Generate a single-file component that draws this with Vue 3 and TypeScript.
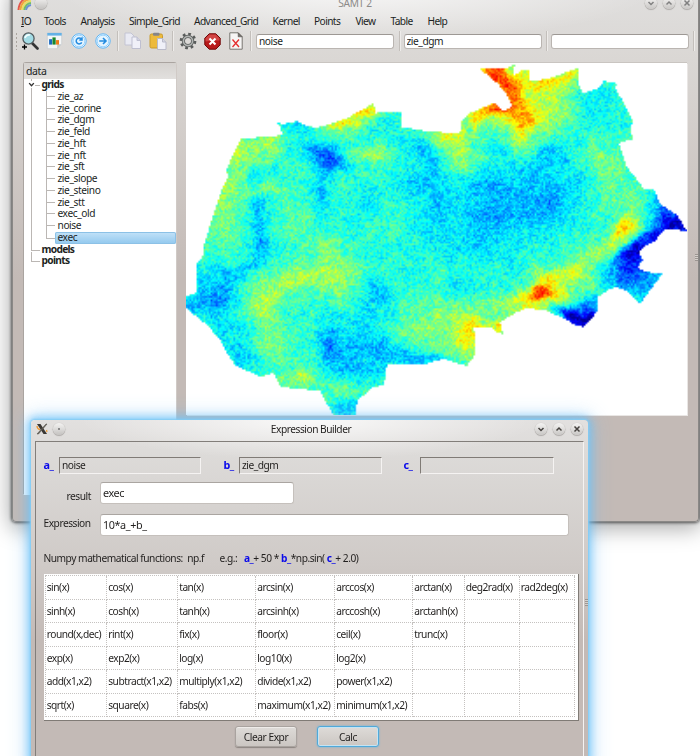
<script setup lang="ts">
import { onMounted, ref } from 'vue'

interface Blob {
  x: number
  y: number
  rx: number
  ry: number
  amp: number
  rot?: number
}

const menu = [
  { label: 'IO', w: 23 },
  { label: 'Tools', w: 36.5 },
  { label: 'Analysis', w: 48.5 },
  { label: 'Simple_Grid', w: 65 },
  { label: 'Advanced_Grid', w: 78.5 },
  { label: 'Kernel', w: 41.5 },
  { label: 'Points', w: 41.5 },
  { label: 'View', w: 35 },
  { label: 'Table', w: 37 },
  { label: 'Help', w: 30 },
]

const grids = [
  'zie_az', 'zie_corine', 'zie_dgm', 'zie_feld', 'zie_hft', 'zie_nft', 'zie_sft',
  'zie_slope', 'zie_steino', 'zie_stt', 'exec_old', 'noise', 'exec',
]

const functions: string[][] = [
  ['sin(x)', 'cos(x)', 'tan(x)', 'arcsin(x)', 'arccos(x)', 'arctan(x)', 'deg2rad(x)', 'rad2deg(x)'],
  ['sinh(x)', 'cosh(x)', 'tanh(x)', 'arcsinh(x)', 'arccosh(x)', 'arctanh(x)', '', ''],
  ['round(x,dec)', 'rint(x)', 'fix(x)', 'floor(x)', 'ceil(x)', 'trunc(x)', '', ''],
  ['exp(x)', 'exp2(x)', 'log(x)', 'log10(x)', 'log2(x)', '', '', ''],
  ['add(x1,x2)', 'subtract(x1,x2)', 'multiply(x1,x2)', 'divide(x1,x2)', 'power(x1,x2)', '', '', ''],
  ['sqrt(x)', 'square(x)', 'fabs(x)', 'maximum(x1,x2)', 'minimum(x1,x2)', '', '', ''],
]

const inputA = ref('noise')
const inputB = ref('zie_dgm')
const map = ref<HTMLCanvasElement | null>(null)

const cols = 286
const rows = 201
const originX = 186
const originY = 63
const cell = 501 / cols

const outline: number[] = [
  241, 138, 267, 137, 282, 135, 281, 128, 277, 122, 283, 124, 297, 121, 305, 125, 316, 128, 330, 124, 347, 118,
  362, 110, 373, 103, 376, 113, 387, 112, 401, 111.5, 401, 127, 425, 131, 440, 132, 458, 134, 461, 130, 462, 120,
  470, 113, 494, 103, 504, 111, 512, 106, 507, 95, 498, 84, 480, 69, 505, 69, 515, 64, 513, 76, 522, 70, 530, 69,
  529, 81, 547, 79, 578, 68, 579, 85, 583, 93, 597, 89, 604, 81, 619, 84, 615, 87, 622, 100, 633, 122, 630, 128,
  633, 139, 619, 143, 627, 167, 645, 190, 654, 189, 660, 204, 677, 215, 687, 231, 665, 229, 655, 241, 643, 247,
  639, 253, 643, 260, 638, 267, 645, 272, 663, 273, 640, 304, 628, 292, 617, 287, 608, 290, 598, 297, 597, 312,
  584, 327, 577, 326, 563, 318, 547, 311, 527, 308, 515, 313, 500, 322, 503, 334, 497, 332, 490, 327, 474, 327,
  475, 355, 467, 366, 443, 359, 422, 365, 387, 365, 384, 385, 372, 388, 357, 401, 356, 415, 333, 415, 320, 391,
  300, 389, 281, 387, 273, 373, 260, 377, 235, 365, 228, 355, 220, 340, 208, 326, 186, 308, 186, 296, 196, 293,
  196, 264, 204, 255, 203, 248, 217, 203, 223, 187, 228, 177, 226, 170,
]

const blobs: Blob[] = [
  // high ground along the northern edge
  { x: 492, y: 73, rx: 18, ry: 12, amp: 0.34, rot: 0.5 },
  { x: 511, y: 92, rx: 13, ry: 20, amp: 0.29, rot: -0.3 },
  { x: 524, y: 72, rx: 10, ry: 9, amp: 0.12 },
  { x: 540, y: 84, rx: 14, ry: 8, amp: 0.16 },
  { x: 567, y: 77, rx: 18, ry: 10, amp: 0.19, rot: -0.3 },
  { x: 524, y: 121, rx: 16, ry: 15, amp: 0.19 },
  { x: 496, y: 107, rx: 14, ry: 7, amp: 0.28 },
  { x: 478, y: 116, rx: 15, ry: 9, amp: 0.2, rot: -0.3 },
  { x: 500, y: 122, rx: 20, ry: 9, amp: 0.08 },
  { x: 550, y: 106, rx: 24, ry: 20, amp: 0.12 },
  { x: 367, y: 111, rx: 14, ry: 7, amp: 0.2, rot: -0.5 },
  { x: 345, y: 122, rx: 20, ry: 8, amp: 0.16, rot: -0.3 },
  { x: 375, y: 155, rx: 20, ry: 7, amp: 0.12 },
  { x: 444, y: 137, rx: 19, ry: 7, amp: 0.15 },
  { x: 461, y: 154, rx: 16, ry: 18, amp: 0.13 },
  { x: 520, y: 143, rx: 16, ry: 12, amp: 0.09 },
  // western slopes
  { x: 240, y: 148, rx: 16, ry: 15, amp: 0.12 },
  { x: 270, y: 143, rx: 9, ry: 14, amp: 0.12 },
  { x: 228, y: 190, rx: 12, ry: 32, amp: 0.09, rot: 0.3 },
  { x: 267, y: 190, rx: 9, ry: 6, amp: 0.11 },
  { x: 220, y: 225, rx: 18, ry: 28, amp: 0.05 },
  { x: 300, y: 212, rx: 18, ry: 24, amp: 0.04 },
  // central ridge
  { x: 331, y: 246, rx: 14, ry: 11, amp: 0.08 },
  { x: 298, y: 281, rx: 22, ry: 8, amp: 0.08, rot: -0.25 },
  { x: 322, y: 274, rx: 24, ry: 15, amp: 0.07 },
  { x: 264, y: 306, rx: 13, ry: 12, amp: 0.11, rot: -0.5 },
  { x: 270, y: 290, rx: 16, ry: 12, amp: 0.06 },
  { x: 345, y: 288, rx: 19, ry: 20, amp: 0.07 },
  { x: 273, y: 341, rx: 15, ry: 24, amp: 0.07 },
  { x: 306, y: 377, rx: 12, ry: 7, amp: 0.1, rot: 0.5 },
  { x: 290, y: 382, rx: 20, ry: 10, amp: 0.08 },
  { x: 348, y: 391, rx: 20, ry: 7, amp: 0.07 },
  { x: 425, y: 323, rx: 38, ry: 24, amp: 0.07 },
  { x: 418, y: 342, rx: 17, ry: 9, amp: 0.04 },
  // south-eastern peaks
  { x: 541, y: 293, rx: 10, ry: 6, amp: 0.24 },
  { x: 534, y: 297, rx: 26, ry: 11, amp: 0.16, rot: -0.3 },
  { x: 548, y: 278, rx: 12, ry: 9, amp: 0.11 },
  { x: 565, y: 273, rx: 14, ry: 8, amp: 0.11, rot: -0.3 },
  { x: 584, y: 270, rx: 22, ry: 18, amp: 0.08, rot: -0.4 },
  { x: 565, y: 300, rx: 11, ry: 9, amp: 0.13 },
  { x: 540, y: 308, rx: 14, ry: 5, amp: 0.1 },
  { x: 463, y: 334, rx: 12, ry: 15, amp: 0.15, rot: 0.3 },
  { x: 474, y: 346, rx: 10, ry: 12, amp: 0.11 },
  { x: 490, y: 325, rx: 26, ry: 5, amp: 0.14 },
  { x: 502, y: 329, rx: 6, ry: 6, amp: 0.12 },
  { x: 490, y: 306, rx: 34, ry: 16, amp: 0.03 },
  { x: 441, y: 353, rx: 14, ry: 8, amp: 0.05 },
  { x: 626, y: 229, rx: 8, ry: 12, amp: 0.22, rot: 0.6 },
  { x: 612, y: 245, rx: 20, ry: 10, amp: 0.12, rot: -0.6 },
  { x: 610, y: 175, rx: 16, ry: 25, amp: 0.08 },
  { x: 592, y: 153, rx: 13, ry: 11, amp: 0.06 },
  { x: 632, y: 205, rx: 12, ry: 14, amp: 0.05 },
  // basins
  { x: 330, y: 155, rx: 13, ry: 10, amp: -0.2, rot: 0.5 },
  { x: 311, y: 149, rx: 9, ry: 8, amp: -0.12 },
  { x: 336, y: 167, rx: 13, ry: 9, amp: -0.08 },
  { x: 321, y: 195, rx: 9, ry: 28, amp: -0.09 },
  { x: 285, y: 150, rx: 6, ry: 6, amp: -0.09 },
  { x: 296, y: 126, rx: 12, ry: 8, amp: -0.06 },
  { x: 256, y: 170, rx: 20, ry: 9, amp: -0.04 },
  { x: 260, y: 215, rx: 7, ry: 15, amp: -0.1 },
  { x: 259, y: 243, rx: 9, ry: 18, amp: -0.11 },
  { x: 248, y: 268, rx: 18, ry: 8, amp: -0.08, rot: -0.5 },
  { x: 216, y: 285, rx: 20, ry: 22, amp: -0.1 },
  { x: 219, y: 301, rx: 12, ry: 8, amp: -0.09 },
  { x: 190, y: 304, rx: 19, ry: 9, amp: -0.12 },
  { x: 223, y: 330, rx: 18, ry: 18, amp: -0.08, rot: 0.8 },
  { x: 242, y: 362, rx: 16, ry: 16, amp: -0.07 },
  { x: 329, y: 343, rx: 8, ry: 17, amp: -0.13 },
  { x: 352, y: 355, rx: 26, ry: 28, amp: -0.1 },
  { x: 395, y: 352, rx: 26, ry: 13, amp: -0.11, rot: 0.15 },
  { x: 428, y: 361, rx: 16, ry: 6, amp: -0.1 },
  { x: 374, y: 287, rx: 9, ry: 14, amp: -0.08, rot: -0.4 },
  { x: 365, y: 312, rx: 26, ry: 14, amp: -0.05 },
  { x: 385, y: 300, rx: 15, ry: 14, amp: -0.05 },
  { x: 344, y: 410, rx: 15, ry: 9, amp: -0.07 },
  { x: 365, y: 208, rx: 18, ry: 20, amp: -0.05 },
  { x: 418, y: 147, rx: 22, ry: 15, amp: -0.07 },
  { x: 434, y: 166, rx: 18, ry: 18, amp: -0.06 },
  { x: 414, y: 184, rx: 18, ry: 16, amp: -0.05 },
  { x: 438, y: 207, rx: 18, ry: 20, amp: -0.06 },
  { x: 389, y: 122, rx: 13, ry: 10, amp: -0.04 },
  { x: 485, y: 182, rx: 36, ry: 16, amp: -0.09 },
  { x: 546, y: 188, rx: 27, ry: 28, amp: -0.1 },
  { x: 497, y: 215, rx: 42, ry: 22, amp: -0.09 },
  { x: 492, y: 217, rx: 12, ry: 4, amp: -0.05 },
  { x: 556, y: 212, rx: 20, ry: 18, amp: -0.05 },
  { x: 550, y: 152, rx: 22, ry: 12, amp: -0.07 },
  { x: 590, y: 112, rx: 24, ry: 24, amp: -0.06 },
  { x: 480, y: 244, rx: 55, ry: 18, amp: -0.06 },
  { x: 462, y: 287, rx: 16, ry: 12, amp: -0.06 },
  { x: 492, y: 147, rx: 18, ry: 9, amp: -0.06 },
  { x: 583, y: 322, rx: 18, ry: 12, amp: -0.38 },
  { x: 566, y: 315, rx: 10, ry: 5, amp: -0.18, rot: 0.4 },
  { x: 587, y: 302, rx: 12, ry: 8, amp: -0.12 },
  { x: 682, y: 227, rx: 22, ry: 16, amp: -0.31, rot: 0.6 },
  { x: 661, y: 218, rx: 13, ry: 9, amp: -0.13 },
  { x: 648, y: 242, rx: 20, ry: 8, amp: -0.29, rot: -0.5 },
  { x: 634, y: 258, rx: 12, ry: 14, amp: -0.19, rot: -0.4 },
  { x: 622, y: 274, rx: 13, ry: 17, amp: -0.12 },
  { x: 648, y: 282, rx: 24, ry: 20, amp: -0.14 },
  { x: 603, y: 271, rx: 10, ry: 16, amp: -0.05 },
  { x: 659, y: 200, rx: 9, ry: 9, amp: -0.07 },
]

function jet(v: number): [number, number, number] {
  const ramp = (c: number) => Math.max(0, Math.min(1, 1.5 - Math.abs(4 * v - c))) * 255
  return [ramp(3), ramp(2), ramp(1)]
}

let seed = 20117
function random(): number {
  seed = (seed * 1664525 + 1013904223) >>> 0
  return seed / 4294967296
}

function smoothNoise(size: number): (x: number, y: number) => number {
  const w = Math.ceil(520 / size) + 2
  const h = Math.ceil(370 / size) + 2
  const grid = Array.from({ length: w * h }, () => random() - 0.5)
  return (x, y) => {
    const gx = x / size
    const gy = y / size
    const ix = Math.floor(gx)
    const iy = Math.floor(gy)
    const fx = gx - ix
    const fy = gy - iy
    const k = iy * w + ix
    const top = grid[k] * (1 - fx) + grid[k + 1] * fx
    const bottom = grid[k + w] * (1 - fx) + grid[k + w + 1] * fx
    return top * (1 - fy) + bottom * fy
  }
}

onMounted(() => {
  const ctx = map.value?.getContext('2d')
  if (!ctx) return
  const region = new Path2D()
  for (let i = 0; i < outline.length; i += 2) {
    region.lineTo(outline[i] - originX, outline[i + 1] - originY)
  }
  region.closePath()
  const coarse = smoothNoise(14)
  const fine = smoothNoise(3.2)
  const warpX = smoothNoise(11)
  const warpY = smoothNoise(9)
  const image = ctx.createImageData(cols, rows)
  for (let r = 0; r < rows; r++) {
    for (let c = 0; c < cols; c++) {
      const px = (c + 0.5) * cell
      const py = (r + 0.5) * cell
      const k = (r * cols + c) * 4
      const grain = random() - 0.5
      if (!ctx.isPointInPath(region, px, py)) {
        image.data.fill(255, k, k + 4)
        continue
      }
      const wx = px + originX + warpX(px, py) * 10
      const wy = py + originY + warpY(px, py) * 10
      let v = 0.422
      for (const b of blobs) {
        const dx = wx - b.x
        const dy = wy - b.y
        const cos = Math.cos(b.rot ?? 0)
        const sin = Math.sin(b.rot ?? 0)
        const u = (dx * cos + dy * sin) / b.rx
        const w = (dy * cos - dx * sin) / b.ry
        const d = u * u + w * w
        if (d < 9) v += b.amp * Math.exp(-d * 0.8)
      }
      v += coarse(px, py) * 0.05 + fine(px, py) * 0.07 + grain * 0.13
      const [red, green, blue] = jet(Math.max(0.02, Math.min(0.95, v)))
      image.data[k] = red
      image.data[k + 1] = green
      image.data[k + 2] = blue
      image.data[k + 3] = 255
    }
  }
  ctx.putImageData(image, 0, 0)
})
</script>

<template>
  <div class="desktop">
    <section class="window main">
      <header class="main-title">
        <svg class="rainbow" width="15" height="14" viewBox="0 0 15 14" fill="none" stroke-width="2">
          <path d="M1.500 14C2 6 7 1.500 14 1" stroke="#e2574c" />
          <path d="M3.400 14C4 7.500 8 3.500 14 3" stroke="#f0a63c" />
          <path d="M5.300 14C6 9 9 5.500 14 5" stroke="#e8df61" />
          <path d="M7.200 14C8 10.300 10 7.500 14 7" stroke="#74bd68" />
          <path d="M9 14C9.500 11.500 11 9.500 14 9" stroke="#6c94d2" />
        </svg>
        <span class="knob dot faded"></span>
        <span class="title-text">SAMT 2</span>
        <span class="knob faded"><svg viewBox="0 0 12 12"><path d="M3.500 5l2.500 2.500L8.500 5" /></svg></span>
        <span class="knob faded"><svg viewBox="0 0 12 12"><path d="M3.500 7.500L6 5l2.500 2.500" /></svg></span>
        <span class="knob faded"><svg viewBox="0 0 12 12"><path d="M3.500 3.500l5 5m0-5l-5 5" /></svg></span>
      </header>
      <nav class="menubar">
        <span v-for="item in menu" :key="item.label" :style="{ width: item.w + 'px' }">
          <template v-if="item.label === 'IO'"><u>I</u>O</template>
          <template v-else>{{ item.label }}</template>
        </span>
      </nav>
      <div class="toolbar">
        <i class="grip"></i>
        <svg class="tool zoom" viewBox="0 0 18 18">
          <path d="M11 11l5.500 5.500" stroke="#333" stroke-width="2.600" stroke-linecap="round" />
          <circle cx="7.500" cy="6.500" r="5.600" fill="#a3dce5" stroke="#525b5e" stroke-width="1.300" />
          <path d="M4 6a4 4 0 0 1 5-3" fill="none" stroke="#f2ffff" stroke-width="1.800" />
          <path d="M1 15h5m-2.500-2.500v5" stroke="#000" stroke-width="1.300" />
        </svg>
        <svg class="tool chart" viewBox="0 0 18 20">
          <path d="M1 1.500h16v12l-5 5H1z" fill="#f4f6f7" stroke="#c3c8ca" stroke-width=".7" />
          <path d="M1 1h16v3H1z" fill="#63b1e6" />
          <path d="M17 13.500h-5v5z" fill="#c6cacc" />
          <path d="M3 8h3.300v6H3z" fill="#1a69c0" />
          <path d="M6.700 6h3.600v8H6.700z" fill="#18872d" />
          <path d="M10.700 9H14v5h-3.300z" fill="#ee7a19" />
        </svg>
        <svg class="tool round" viewBox="0 0 16 16">
          <circle cx="8" cy="8" r="7.200" fill="#fff" stroke="#5ab4f7" stroke-width="1" />
          <circle cx="8" cy="8" r="5.900" fill="#e4f4ff" stroke="#7cc5fb" stroke-width=".8" />
          <path d="M10.300 6.100A2.900 2.900 0 1 0 10.700 9.300M11 4.200v2.800H8.300" fill="none" stroke="#258ce0" stroke-width="1.500" />
        </svg>
        <svg class="tool round next" viewBox="0 0 16 16">
          <circle cx="8" cy="8" r="7.200" fill="#fff" stroke="#5ab4f7" stroke-width="1" />
          <circle cx="8" cy="8" r="5.900" fill="#e4f4ff" stroke="#7cc5fb" stroke-width=".8" />
          <path d="M4.200 8h6.600M8 5l3 3-3 3" fill="none" stroke="#258ce0" stroke-width="1.600" />
        </svg>
        <i class="sep s1"></i>
        <svg class="tool copy" viewBox="0 0 18 18">
          <path d="M1 1h6l3 3v9H1z" fill="#e9eaf3" stroke="#c3c4d3" />
          <path d="M8 5h5l3.500 3.500V16.500H8z" fill="#f0f0f8" stroke="#bebfd0" />
          <path d="M13 5v3.500h3.500" fill="#d3d4e2" stroke="#bebfd0" />
        </svg>
        <svg class="tool paste" viewBox="0 0 18 18">
          <rect x="1" y="2" width="12.500" height="14" rx="1.500" fill="#edba3c" stroke="#c99b2d" />
          <rect x="4" y=".7" width="6.500" height="3" rx="1" fill="#85858a" />
          <path d="M8.500 6.500h5l3.500 3.500v7.500H8.500z" fill="#eff0f8" stroke="#b9bac9" />
          <path d="M13.500 6.500V10H17" fill="#d6d8e4" stroke="#b9bac9" />
        </svg>
        <i class="sep s2"></i>
        <svg class="tool gear" viewBox="0 0 18 18">
          <circle cx="9" cy="9" r="7" fill="none" stroke="#595c5b" stroke-width="2.700" stroke-dasharray="2.700 2.798" />
          <circle cx="9" cy="9" r="4.600" fill="none" stroke="#5b5e5d" stroke-width="3.200" />
          <circle cx="9" cy="9" r="4.600" fill="none" stroke="#b1b4b2" stroke-width="1.600" />
        </svg>
        <svg class="tool stop" viewBox="0 0 17 17">
          <path d="M5.200.8h6.600l4.400 4.400v6.600l-4.400 4.400H5.200L.8 11.800V5.200z" fill="#b81a1a" stroke="#6e0808" />
          <path d="M5.300 1.500h6.400l3.800 3.800v2.200Q8.500 7 1.500 8.500V5.300z" fill="#dc5959" opacity=".7" />
          <path d="M5.500 5.500l6 6m0-6l-6 6" stroke="#fff" stroke-width="2.100" />
        </svg>
        <svg class="tool del" viewBox="0 0 14 18">
          <path d="M.8.8h8.400l4 4v12.400H.8z" fill="#f6f5f4" stroke="#777570" />
          <path d="M9.200.8v4h4z" fill="#76736f" stroke="#55534f" stroke-width=".6" />
          <path d="M3.500 7.500l6.500 7.500m0-7.500L3.500 15" stroke="#e52d2d" stroke-width="1.300" />
        </svg>
        <i class="sep s3"></i>
        <input v-model="inputA" class="field" type="text" />
        <i class="sep s4"></i>
        <input v-model="inputB" class="field" type="text" />
        <i class="sep s4"></i>
        <input class="field" type="text" />
        <i class="sep s5"></i>
      </div>
      <div class="workspace">
        <aside class="tree">
          <div class="tree-head">data</div>
          <ul>
            <li class="branch open">
              <svg class="caret" viewBox="0 0 6 6"><path d="M1 1.800L3 4l2-2.200" /></svg>
              <b>grids</b>
              <ul>
                <li v-for="name in grids" :key="name" class="leaf" :class="{ selected: name === 'exec' }"><span>{{ name }}</span></li>
              </ul>
            </li>
            <li class="branch"><b>models</b></li>
            <li class="branch"><b>points</b></li>
          </ul>
        </aside>
        <canvas ref="map" class="map" :width="cols" :height="rows"></canvas>
        <i class="handle"></i>
      </div>
    </section>

    <section class="window dialog">
      <header class="dialog-title">
        <svg class="xlogo" viewBox="0 0 12 12">
          <path d="M1 1h3.500l6.500 10H7.500z" fill="#3b3834" />
          <path d="M10 1h1L2.500 11H1z" fill="#5d5953" stroke="#5d5953" stroke-width=".6" />
          <path d="M1 3q0 3 3 3.500" stroke="#ef9b36" stroke-width="1.300" fill="none" />
          <path d="M10.500 7l.5 2" stroke="#ef9b36" stroke-width="1.200" />
        </svg>
        <span class="knob dot"></span>
        <span class="title-text">Expression Builder</span>
        <span class="knob"><svg viewBox="0 0 12 12"><path d="M3.500 5l2.500 2.500L8.500 5" /></svg></span>
        <span class="knob"><svg viewBox="0 0 12 12"><path d="M3.500 7.500L6 5l2.500 2.500" /></svg></span>
        <span class="knob"><svg viewBox="0 0 12 12"><path d="M3.500 3.500l5 5m0-5l-5 5" /></svg></span>
      </header>
      <div class="panel">
        <div class="vars">
          <label>a_</label><span class="sunken wa">noise</span>
          <label>b_</label><span class="sunken wb">zie_dgm</span>
          <label>c_</label><span class="sunken wc"></span>
        </div>
        <div class="row result"><label>result</label><div class="line">exec</div></div>
        <div class="row expr"><label>Expression</label><div class="line">10*a_+b_</div></div>
        <p class="hint">
          <span class="lead">Numpy mathematical functions:&nbsp; np.f</span>
          <span class="eg">e.g.:</span>
          <span><b>a_</b>+ 50 * <b>b_</b>*np.sin( <b>c_</b>+ 2.0)</span>
        </p>
        <div class="table-box">
          <div class="functions">
            <template v-for="(line, r) in functions" :key="r">
              <span v-for="(fn, c) in line" :key="c">{{ fn }}</span>
            </template>
          </div>
        </div>
        <div class="actions">
          <button type="button">Clear Expr</button>
          <button type="button" class="primary">Calc</button>
        </div>
        <i class="handle"></i>
      </div>
    </section>
  </div>
</template>

<style>
body {
  margin: 0;
  background: #fff;
}
</style>

<style scoped>
* {
  box-sizing: border-box;
}
.desktop {
  position: relative;
  width: 700px;
  height: 756px;
  overflow: hidden;
  background: #fff;
  color: #211f1e;
  font: 10.2px/12px "Noto Sans", "Open Sans", sans-serif;
  letter-spacing: -.48px;
}
.window {
  position: absolute;
}
.main {
  left: 12px;
  top: -12px;
  width: 687px;
  height: 534px;
  padding-top: 5px;
  border: 1px solid #8a8886;
  border-top: 0;
  border-radius: 4px;
  background:
    radial-gradient(ellipse 300px 55px at 50% 0, rgba(255, 255, 255, .75), rgba(255, 255, 255, 0)),
    linear-gradient(#e0dfde 0, #dad7d4 72px, #c3bab6 290px, #c3bab6);
  box-shadow: 0 0 3px 1px #555, 0 4px 22px 2px rgba(0, 0, 0, .35);
}
.main-title {
  display: flex;
  align-items: center;
  height: 19px;
  padding: 0 5px 0 4px;
}
.rainbow {
  flex: none;
}
.title-text {
  flex: 1;
  text-align: center;
}
.main-title .title-text {
  color: #8d8b89;
  padding-left: 24px;
  letter-spacing: -.3px;
}
.knob {
  display: block;
  flex: none;
  width: 12px;
  height: 12px;
  margin-left: 6px;
  border-radius: 50%;
  background: linear-gradient(#f4f3f2, #c9c7c5);
  box-shadow: 0 .5px 1px .3px #a19e9b;
}
.knob svg {
  display: block;
  fill: none;
  stroke: #45423f;
  stroke-width: 1.5;
}
.faded svg {
  stroke: #808080;
}
.dot {
  margin-left: 3px;
  background: radial-gradient(circle, #888 0, #888 .7px, transparent 1.2px), linear-gradient(#f4f3f2, #c4c2c0);
}
.faded.dot {
  background: linear-gradient(#f4f3f2, #c4c2c0);
}
.menubar {
  display: flex;
  height: 17px;
  padding-left: 8px;
  line-height: 18px;
  letter-spacing: -.6px;
  white-space: nowrap;
}
.menubar span {
  flex: none;
}
.toolbar {
  display: flex;
  align-items: center;
  height: 24px;
  padding-left: 2px;
}
.grip {
  width: 4px;
  height: 18px;
  background: radial-gradient(circle, #aaa59f .8px, transparent 1px) 0 0 / 3px 4px;
}
.tool {
  flex: none;
  width: 18px;
  height: 18px;
}
.zoom { margin-left: 2px; }
.chart { width: 17px; margin-left: 7px; }
.round { width: 16px; height: 16px; margin-left: 8px; }
.next { margin-left: 8px; }
.copy { margin-left: 5px; }
.paste { margin-left: 7px; }
.gear { margin-left: 5px; }
.stop { width: 17px; height: 17px; margin-left: 7px; }
.del { width: 14px; margin-left: 8px; }
.sep {
  flex: none;
  width: 2px;
  height: 20px;
  border-left: 1px solid #c3bfbb;
  border-right: 1px solid #eeecea;
}
.s1 { margin-left: 6px; }
.s2 { margin-left: 5px; }
.s3 { margin-left: 7px; margin-right: 4px; }
.s4 { margin: 0 3px 0 4.500px; }
.s5 { margin-left: 4px; }
.field {
  flex: none;
  width: 138px;
  height: 15px;
  padding: 0 0 1px 2px;
  border: 1px solid #bab5b1;
  border-top-color: #9d9894;
  border-radius: 3px;
  background: #fff;
  color: inherit;
  font: inherit;
  letter-spacing: -.45px;
}
.workspace {
  display: flex;
  align-items: flex-start;
  padding: 9px 0 0 10px;
}
.tree {
  width: 154px;
  height: 433px;
  margin-right: 9px;
  border: 1px solid #aaa4a0;
  border-color: #aaa4a0 #d0cac6 #fff #aaa4a0;
  border-radius: 3px 3px 0 0;
  background: #fff;
  letter-spacing: -.42px;
}
.tree-head {
  height: 16px;
  padding: 2px;
  background: linear-gradient(#d5d2cf, #e2e0de);
  font-size: 10.5px;
}
.tree ul {
  margin: 0;
  padding: 0;
  list-style: none;
}
.tree b {
  display: block;
  padding-left: 17.5px;
  letter-spacing: -.7px;
}
.branch {
  position: relative;
  line-height: 11.8px;
}
.branch::before {
  content: "";
  position: absolute;
  left: 7px;
  top: 0;
  width: 8px;
  height: 6px;
  border: solid #bbb7b4;
  border-width: 0 0 1px 1px;
}
.branch:not(:last-child)::after {
  content: "";
  position: absolute;
  left: 7px;
  top: 8px;
  bottom: 0;
  border-left: 1px solid #bbb7b4;
}
.caret {
  position: absolute;
  left: 4px;
  top: 2px;
  z-index: 1;
  width: 7px;
  height: 7px;
  background: #fff;
  fill: none;
  stroke: #333;
  stroke-width: 1.2;
}
.leaf {
  display: flex;
  height: 11.75px;
  padding-left: 22px;
}
.leaf::before {
  content: "";
  flex: none;
  width: 8px;
  height: 6px;
  border: solid #bbb7b4;
  border-width: 0 0 1px 1px;
}
.leaf:not(:last-child)::before {
  height: 11.75px;
  border-bottom: 0;
  background: linear-gradient(#bbb7b4, #bbb7b4) 0 5px / 8px 1px no-repeat;
}
.leaf span {
  flex: 1;
  padding-left: 2.5px;
}
.selected span {
  border-radius: 2px;
  background: linear-gradient(#c3e2f8, #91c8ee);
  box-shadow: inset 0 0 0 1px #8cc1e6;
}
.map {
  display: block;
  width: 501px;
  height: 352px;
  margin-top: 1px;
  background: #fff;
  box-shadow: 0 -1px #c9c5c1, 1px 1px #e9e6e4;
}
.handle {
  width: 3px;
  height: 7px;
  background: repeating-linear-gradient(#9c9692 0 1px, #d5d0cc 1px 2px);
}
.workspace .handle {
  margin: 192px 0 0 8px;
}
.dialog {
  left: 31px;
  top: 420px;
  width: 557px;
  height: 350px;
  border-radius: 4px 4px 0 0;
  background:
    radial-gradient(ellipse 230px 40px at 50% 0, rgba(255, 255, 255, .8), rgba(255, 255, 255, 0)),
    linear-gradient(#e2e0df 0, #dddbd9 30px, #cfcac7 145px, #c3bab6 220px, #c3bab6);
  box-shadow: 0 0 2px 1px #84cdf5, 0 0 8px 3px rgba(105, 193, 250, .75), 0 0 20px 4px rgba(120, 190, 245, .45);
}
.dialog-title {
  display: flex;
  align-items: center;
  height: 21px;
  padding: 0 5px 4px;
}
.dialog-title .title-text {
  padding: 1px 0 0 28px;
}
.xlogo {
  width: 12px;
  height: 12px;
}
.dialog-title .dot {
  margin-left: 5px;
}
.panel {
  position: relative;
  width: 549px;
  height: 320px;
  margin-left: 4px;
  padding: 15px 0 0 7.500px;
  border: 1px solid #827e7a;
  border-right-color: #f5f3f2;
}
.vars {
  display: flex;
  height: 18px;
  line-height: 15px;
}
.vars label,
.hint b {
  color: #0b0bea;
  font-weight: 700;
}
.vars label {
  width: 15.500px;
  font-size: 10.8px;
}
.sunken {
  height: 17px;
  padding: 0 2px;
  border: 1px solid #807b76;
  border-right-color: #f5f3f2;
  border-bottom-color: #f5f3f2;
}
.wa { width: 142px; margin-right: 22.500px; }
.wb { width: 143px; margin-right: 21.500px; }
.wc { width: 134px; margin-left: 1px; }
.row {
  display: flex;
  align-items: center;
}
.row label {
  width: 56px;
}
.result {
  margin-top: 7px;
}
.result label {
  padding: 5px 0 0 23px;
}
.line {
  height: 22px;
  padding-left: 2.5px;
  border: 1px solid #c5c0bc;
  border-top-color: #aaa5a1;
  border-radius: 3px;
  background: #fff;
  font-size: 10.8px;
  line-height: 20px;
  letter-spacing: -.4px;
}
.result .line {
  width: 194px;
}
.expr {
  margin-top: 10px;
}
.expr label {
  padding-bottom: 4px;
}
.expr .line {
  width: 469px;
}
.hint {
  display: flex;
  margin: 16px 0 0;
  white-space: pre;
}
.lead { width: 176px; }
.eg { width: 24.5px; }
.table-box {
  width: 535px;
  height: 147px;
  margin-top: 10px;
  padding: 1px 0 0 1px;
  border-right: 1px solid #807b76;
  border-bottom: 1px solid #807b76;
  background: #fff;
}
.functions {
  display: grid;
  grid-template-columns: 61.500px 71px 78px 79px 78px 51.500px 55px 55px;
  grid-auto-rows: 23.5px;
  width: 530px;
  border: dotted #c5c2c0;
  border-width: 1px 0 0 1px;
}
.functions span {
  padding-left: 1.200px;
  border: dotted #c5c2c0;
  border-width: 0 1px 1px 0;
  line-height: 22px;
  white-space: nowrap;
}
.actions {
  display: flex;
  gap: 20px;
  margin: 5px 0 0 191.500px;
}
button {
  width: 62px;
  height: 21px;
  padding: 0;
  border: 1px solid #a9a39f;
  border-radius: 3px;
  background: linear-gradient(#dedbd8, #cbc6c2);
  box-shadow: 0 1px 1px #8c8581, inset 0 1px #efecea;
  color: inherit;
  font: inherit;
  letter-spacing: -.45px;
}
.primary {
  border-color: #4fa9da;
  box-shadow: 0 0 2px #59b5e6, inset 0 0 0 1px #c5e4f3;
}
.panel .handle {
  position: absolute;
  right: -5px;
  top: 157px;
}
</style>
